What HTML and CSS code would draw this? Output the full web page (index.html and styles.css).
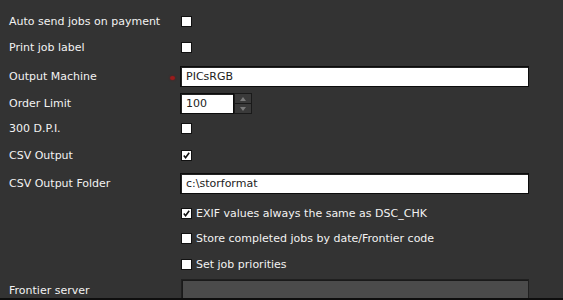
FILE: index.html
```html
<!DOCTYPE html>
<html lang="en">
<head>
  <meta charset="UTF-8" />
  <title>Output Settings</title>
  <link rel="stylesheet" href="styles.css">
</head>
<body>
  <div class="panel">
    <!-- Job options -->
    <div class="row r1">
      <div class="label">Auto send jobs on payment</div>
      <div class="field"><span class="check"></span></div>
    </div>
    <div class="row r2">
      <div class="label">Print job label</div>
      <div class="field"><span class="check"></span></div>
    </div>
    <div class="row r3">
      <div class="label">Output Machine <span class="required"></span></div>
      <div class="field"><div class="text-input">PICsRGB</div></div>
    </div>
    <div class="row r4">
      <div class="label">Order Limit</div>
      <div class="field">
        <div class="text-input number">100</div>
        <div class="spinner">
          <span class="spin up"></span>
          <span class="spin down"></span>
        </div>
      </div>
    </div>
    <div class="row r5">
      <div class="label">300 D.P.I.</div>
      <div class="field"><span class="check"></span></div>
    </div>
    <div class="row r6">
      <div class="label">CSV Output</div>
      <div class="field"><span class="check checked"><svg viewBox="0 0 10 10"><path d="M2 5 L4 7.5 L8 2" /></svg></span></div>
    </div>
    <div class="row r7">
      <div class="label">CSV Output Folder</div>
      <div class="field"><div class="text-input">c:\storformat</div></div>
    </div>

    <!-- Extra options -->
    <div class="row r8">
      <div class="label"></div>
      <div class="field"><span class="check checked"><svg viewBox="0 0 10 10"><path d="M2 5 L4 7.5 L8 2" /></svg></span><span class="opt">EXIF values always the same as DSC_CHK</span></div>
    </div>
    <div class="row r9">
      <div class="label"></div>
      <div class="field"><span class="check"></span><span class="opt">Store completed jobs by date/Frontier code</span></div>
    </div>
    <div class="row r10">
      <div class="label"></div>
      <div class="field"><span class="check"></span><span class="opt">Set job priorities</span></div>
    </div>
    <div class="row r11">
      <div class="label">Frontier server</div>
      <div class="field"><div class="text-input disabled"></div></div>
    </div>
  </div>
</body>
</html>
```

FILE: styles.css
```css
* { box-sizing: border-box; margin: 0; padding: 0; }

body {
  background: #333333;
  font-family: "DejaVu Sans", Verdana, sans-serif;
  font-size: 11px;
  color: #f2f2f2;
}

.panel {
  height: 300px;
  padding-top: 8px;
  border-bottom: 2px solid #0e0e0e;
  overflow: hidden;
}

.row {
  display: flex;
  align-items: center;
  height: 26px;
}

.r3 { height: 32px; }
.r4 { height: 22px; padding-top: 1px; }
.r5 { height: 29px; }
.r6 { height: 24px; }
.r7 { height: 33px; }
.r9 { height: 24px; }
.r10 { height: 28px; }
.r11 { height: 40px; align-items: flex-start; padding-top: 1px; }
.r11 .label { padding-top: 5px; }

.label {
  width: 180px;
  padding-left: 9px;
  display: flex;
  align-items: center;
  justify-content: space-between;
  padding-right: 5px;
}

.field {
  display: flex;
  align-items: center;
  flex: 1;
}

.required {
  width: 5px;
  height: 4px;
  margin-top: 4px;
  border-radius: 50%;
  background: #9a1c1c;
  box-shadow: 0 0 2px #7a1515;
}

.check {
  display: inline-block;
  width: 11px;
  height: 11px;
  background: #fff;
  border: 1px solid #111;
  margin-left: 1px;
}

.check svg {
  display: block;
  width: 9px;
  height: 9px;
}

.check path {
  fill: none;
  stroke: #111;
  stroke-width: 1.8;
}

.opt {
  margin-left: 4px;
}

.text-input {
  width: 349px;
  height: 21px;
  background: #fff;
  border: 1px solid #0c0c0c;
  box-shadow: inset 1px 1px 0 #222;
  color: #222;
  font-size: 11px;
  line-height: 19px;
  padding-left: 5px;
}

.text-input.number {
  width: 54px;
}

.text-input.disabled {
  height: 30px;
  margin-left: 1px;
  width: 348px;
  background: #4b4b4b;
  border-color: #202020;
  box-shadow: inset 1px 1px 0 #1a1a1a;
}

.spinner {
  display: flex;
  flex-direction: column;
  width: 18px;
  height: 21px;
  border: 1px solid #1a1a1a;
  background: #3a3a3a;
}

.spin {
  flex: 1;
  display: flex;
  align-items: center;
  justify-content: center;
}

.spin + .spin { border-top: 1px solid #1a1a1a; }

.spin::after {
  content: "";
  border-left: 3px solid transparent;
  border-right: 3px solid transparent;
}

.spin.up::after { border-bottom: 4px solid #7a7a7a; }
.spin.down::after { border-top: 4px solid #7a7a7a; }
```
